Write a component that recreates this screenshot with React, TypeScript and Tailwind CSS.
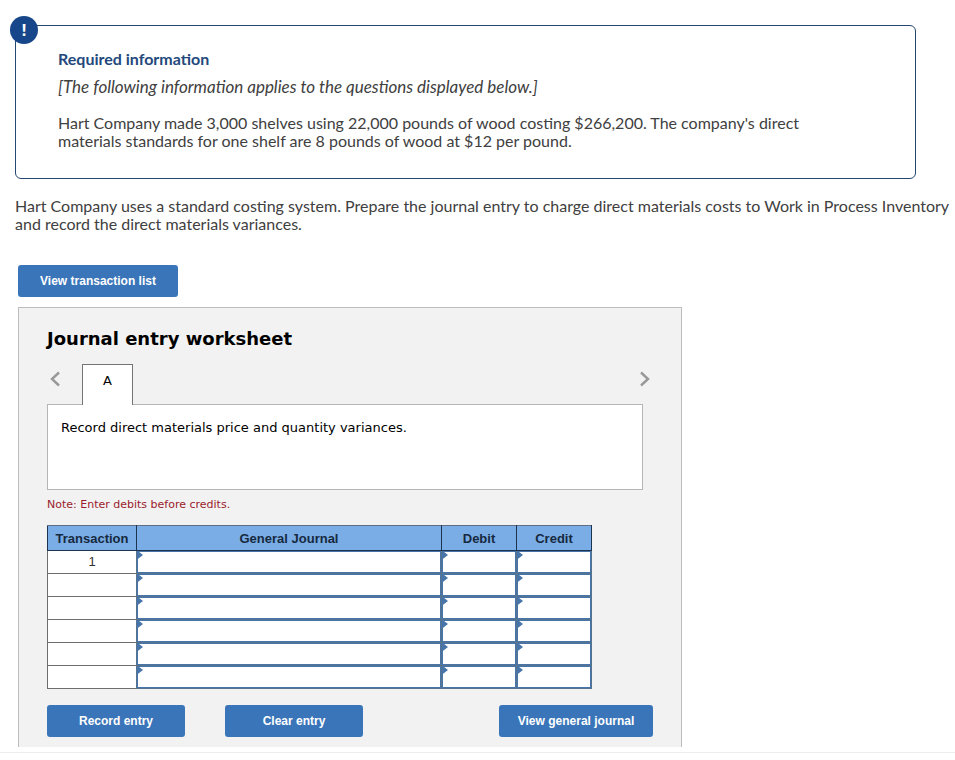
import type { ReactNode } from "react";

const rows = [1, 2, 3, 4, 5, 6];

const columns = [
    { name: "Transaction", width: "w-[89px]" },
    { name: "General Journal", width: "w-[305px]" },
    { name: "Debit", width: "w-[75px]" },
    { name: "Credit", width: "w-[75px]" },
];

const ActionButton = ({ children, className }: { children: ReactNode; className: string }) => (
    <button
        type="button"
        className={`h-8 rounded-[3px] bg-[#3a75b9] font-['Liberation_Sans',Arial,sans-serif] text-xs font-bold text-white hover:bg-[#2f64a1] ${className}`}
    >
        {children}
    </button>
);

const Chevron = ({ path }: { path: string }) => (
    <svg viewBox="0 0 12 16" className="h-4 w-3" fill="none" stroke="#989898" strokeWidth="2.4">
        <path d={path} />
    </svg>
);

const EntryCell = ({ label }: { label: string }) => (
    <td className="relative border border-[#56738f] p-0">
        <input
            type="text"
            aria-label={label}
            className="block h-[22px] w-full border border-[#4775a9] bg-white px-2 text-[13px] outline-none"
        />
        <svg viewBox="0 0 6 8" className="pointer-events-none absolute left-0 top-0 h-2 w-1.5" fill="#4775a9">
            <path d="M0 0.5H1.5L6 4L1.5 7.5L0 8Z" />
        </svg>
    </td>
);

const RequiredInformation = () => (
    <section className="relative mr-[39px] rounded-md border border-[#24486f] px-[42px] pt-[23px] pb-7">
        <span className="absolute -left-1.5 -top-2.5 grid size-7 place-content-center rounded-full bg-[#17478a] font-['Open_Sans',sans-serif] text-base font-bold text-white">
            !
        </span>
        <h2 className="text-[16px] leading-5 font-bold text-[#23487b]">Required information</h2>
        <p className="mt-2 text-[17px] leading-5 italic">
            [The following information applies to the questions displayed below.]
        </p>
        <p className="mt-[17px] max-w-[770px] leading-[18px]">
            Hart Company made 3,000 shelves using 22,000 pounds of wood costing $266,200. The company's direct
            materials standards for one shelf are 8 pounds of wood at $12 per pound.
        </p>
    </section>
);

const JournalTable = () => (
    <table className="mt-3 w-[545px] table-fixed border-collapse bg-white font-['Liberation_Sans',Arial,sans-serif] text-[13px]">
        <colgroup>
            {columns.map((column) => (
                <col key={column.name} className={column.width} />
            ))}
        </colgroup>
        <thead>
            <tr className="h-[25px] bg-[#7aade5] text-[#16293f]">
                {columns.map((column) => (
                    <th
                        key={column.name}
                        scope="col"
                        className="border border-[#1c3450] border-t-[#5d6f85] px-0 pt-0.5 pb-0 font-bold"
                    >
                        {column.name}
                    </th>
                ))}
            </tr>
        </thead>
        <tbody>
            {rows.map((row) => (
                <tr key={row} className="h-[23px]">
                    <td className="border border-[#6e6e6e] border-r-[#56738f] p-0 text-center text-[#333]">
                        {row === 1 ? row : ""}
                    </td>
                    <EntryCell label={`General journal, line ${row}`} />
                    <EntryCell label={`Debit, line ${row}`} />
                    <EntryCell label={`Credit, line ${row}`} />
                </tr>
            ))}
        </tbody>
    </table>
);

const Worksheet = () => (
    <section className="mt-2.5 ml-[3px] max-w-[664px] border border-b-0 border-[#bdbdbd] bg-[#f2f2f2] px-7 pt-[19px] pb-2.5 font-['DejaVu_Sans',Verdana,sans-serif] text-black">
        <h2 className="text-lg leading-6 font-bold">Journal entry worksheet</h2>
        <div className="mr-2.5 mt-[13px] flex h-10 items-start">
            <button type="button" aria-label="Previous" className="mt-[7px] ml-0.5 cursor-pointer">
                <Chevron path="M10 1.5L3 8L10 14.5" />
            </button>
            <button
                type="button"
                className="relative z-10 ml-[21px] h-[41px] w-[51px] border border-b-0 border-[#747474] bg-white pb-2 text-[13px]"
            >
                A
            </button>
            <button type="button" aria-label="Next" className="mt-[7px] -mr-2 ml-auto cursor-pointer">
                <Chevron path="M2 1.5L9 8L2 14.5" />
            </button>
        </div>
        <div className="mr-2.5 h-[86px] border border-[#b5b5b5] bg-white p-[13px] text-[13px] leading-5">
            Record direct materials price and quantity variances.
        </div>
        <p className="mt-1.5 text-[11px] leading-[17px] text-[#9a1b2c]">Note: Enter debits before credits.</p>
        <JournalTable />
        <div className="mt-4 flex">
            <ActionButton className="w-[138px]">Record entry</ActionButton>
            <ActionButton className="ml-10 w-[138px]">Clear entry</ActionButton>
            <ActionButton className="ml-auto w-[154px]">View general journal</ActionButton>
        </div>
    </section>
);

export default function App() {
    return (
        <main className="bg-white font-['Lato',sans-serif] text-[16px] text-[#404040]">
            <div className="pt-[25px] pl-[15px]">
                <RequiredInformation />
                <p className="mt-[18px] leading-[18px]">
                    Hart Company uses a standard costing system. Prepare the journal entry to charge direct materials
                    costs to Work in Process Inventory and record the direct materials variances.
                </p>
                <ActionButton className="mt-8 ml-[3px] w-40">View transaction list</ActionButton>
                <Worksheet />
            </div>
            <div className="mt-[5px] border-t border-[#ededed]" />
        </main>
    );
}
